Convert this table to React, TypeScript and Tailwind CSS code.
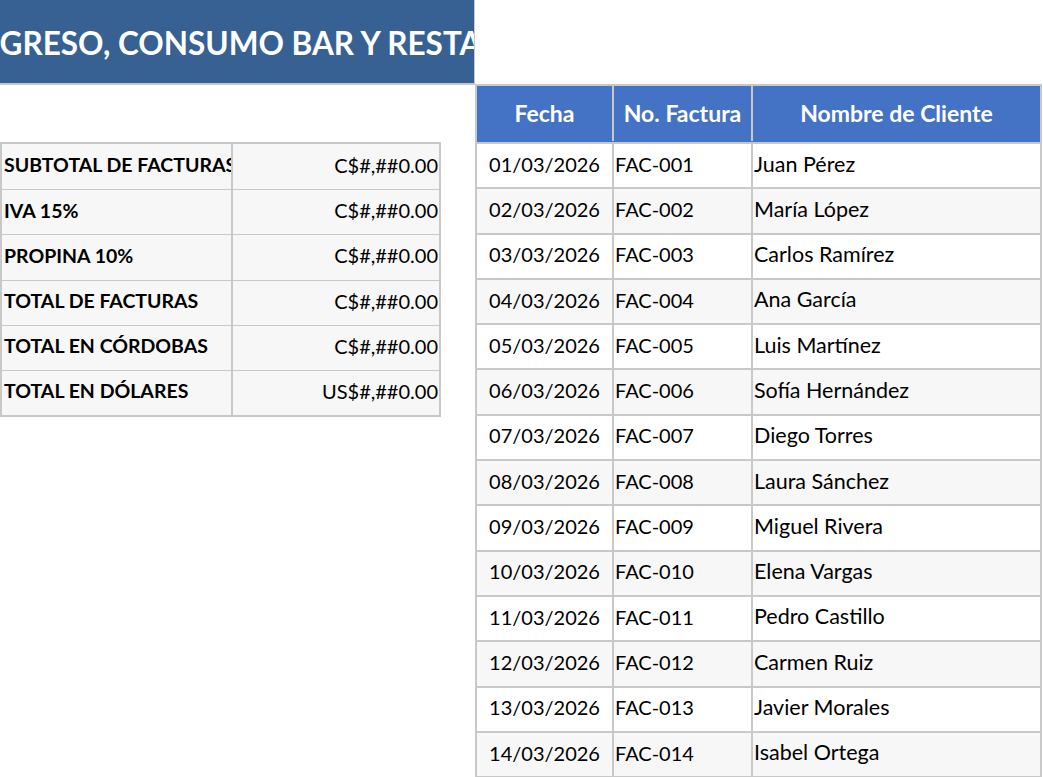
import React from "react";

interface Invoice {
  fecha: string;
  factura: string;
  cliente: string;
}

const TOTALS: [string, string][] = [
  ["SUBTOTAL DE FACTURAS", "C$#,##0.00"],
  ["IVA 15%", "C$#,##0.00"],
  ["PROPINA 10%", "C$#,##0.00"],
  ["TOTAL DE FACTURAS", "C$#,##0.00"],
  ["TOTAL EN CÓRDOBAS", "C$#,##0.00"],
  ["TOTAL EN DÓLARES", "US$#,##0.00"],
];

const CLIENTES = [
  "Juan Pérez",
  "María López",
  "Carlos Ramírez",
  "Ana García",
  "Luis Martínez",
  "Sofía Hernández",
  "Diego Torres",
  "Laura Sánchez",
  "Miguel Rivera",
  "Elena Vargas",
  "Pedro Castillo",
  "Carmen Ruiz",
  "Javier Morales",
  "Isabel Ortega",
];

const INVOICES: Invoice[] = CLIENTES.map((cliente, i) => {
  const n = String(i + 1).padStart(2, "0");
  return {
    fecha: `${n}/03/2026`,
    factura: `FAC-0${n}`,
    cliente,
  };
});

export default function App() {
  return (
    <div className="flex h-[777px] w-[1043px] overflow-hidden bg-white font-['Lato',sans-serif] text-black">
      {/* left column: title + totals */}
      <div className="flex w-[475px] shrink-0 flex-col">
        <div className="flex h-[85px] items-center overflow-hidden border-b-2 border-r border-[#c8c8c8] bg-[#376192]">
          <span className="ml-[-34px] whitespace-nowrap pt-[5px] text-[31.5px] font-bold text-white">
            INGRESO, CONSUMO BAR Y RESTAURANTE
          </span>
        </div>

        <div className="mt-[57px] w-[441px] border-2 border-[#c8c8c8] bg-[#f7f7f7]">
          {TOTALS.map(([label, value], i) => (
            <div
              key={label}
              className={`grid h-[45.2px] grid-cols-[231px_1fr] ${i > 0 ? "border-t border-[#c8c8c8]" : ""}`}
            >
              <div className="flex items-center overflow-hidden whitespace-nowrap border-r-2 border-[#c8c8c8] pb-[4px] pl-[2px] text-[19.5px] font-bold">
                {label}
              </div>
              <div className="flex items-center justify-end pb-[4px] pr-[1px] text-[20px]">{value}</div>
            </div>
          ))}
        </div>
      </div>

      {/* right column: invoice table */}
      <div className="flex-1 pt-[84px]">
        <div className="w-[567px] border-2 border-[#c8c8c8]">
          <div className="grid h-[56px] grid-cols-[137px_139px_1fr] bg-[#4472c4] pb-[1px] text-[23px] font-bold text-white">
            <div className="flex items-center justify-center border-r-2 border-[#c8c8c8]">Fecha</div>
            <div className="flex items-center justify-center whitespace-nowrap border-r-2 border-[#c8c8c8]">
              No. Factura
            </div>
            <div className="flex items-center justify-center">Nombre de Cliente</div>
          </div>
          {INVOICES.map((inv, i) => (
            <div
              key={inv.factura}
              className={`grid h-[45.3px] grid-cols-[137px_139px_1fr] border-t-2 border-[#c8c8c8] ${
                i % 2 === 0 ? "bg-white" : "bg-[#f7f7f7]"
              }`}
            >
              <div className="flex items-center justify-center border-r-2 border-[#c8c8c8] pb-[4px] text-[20px]">
                {inv.fecha}
              </div>
              <div className="flex items-center border-r-2 border-[#c8c8c8] pb-[4px] pl-[1px] text-[20px]">
                {inv.factura}
              </div>
              <div className="flex items-center pb-[4px] pl-[1px] text-[21.5px]">{inv.cliente}</div>
            </div>
          ))}
        </div>
      </div>
    </div>
  );
}
